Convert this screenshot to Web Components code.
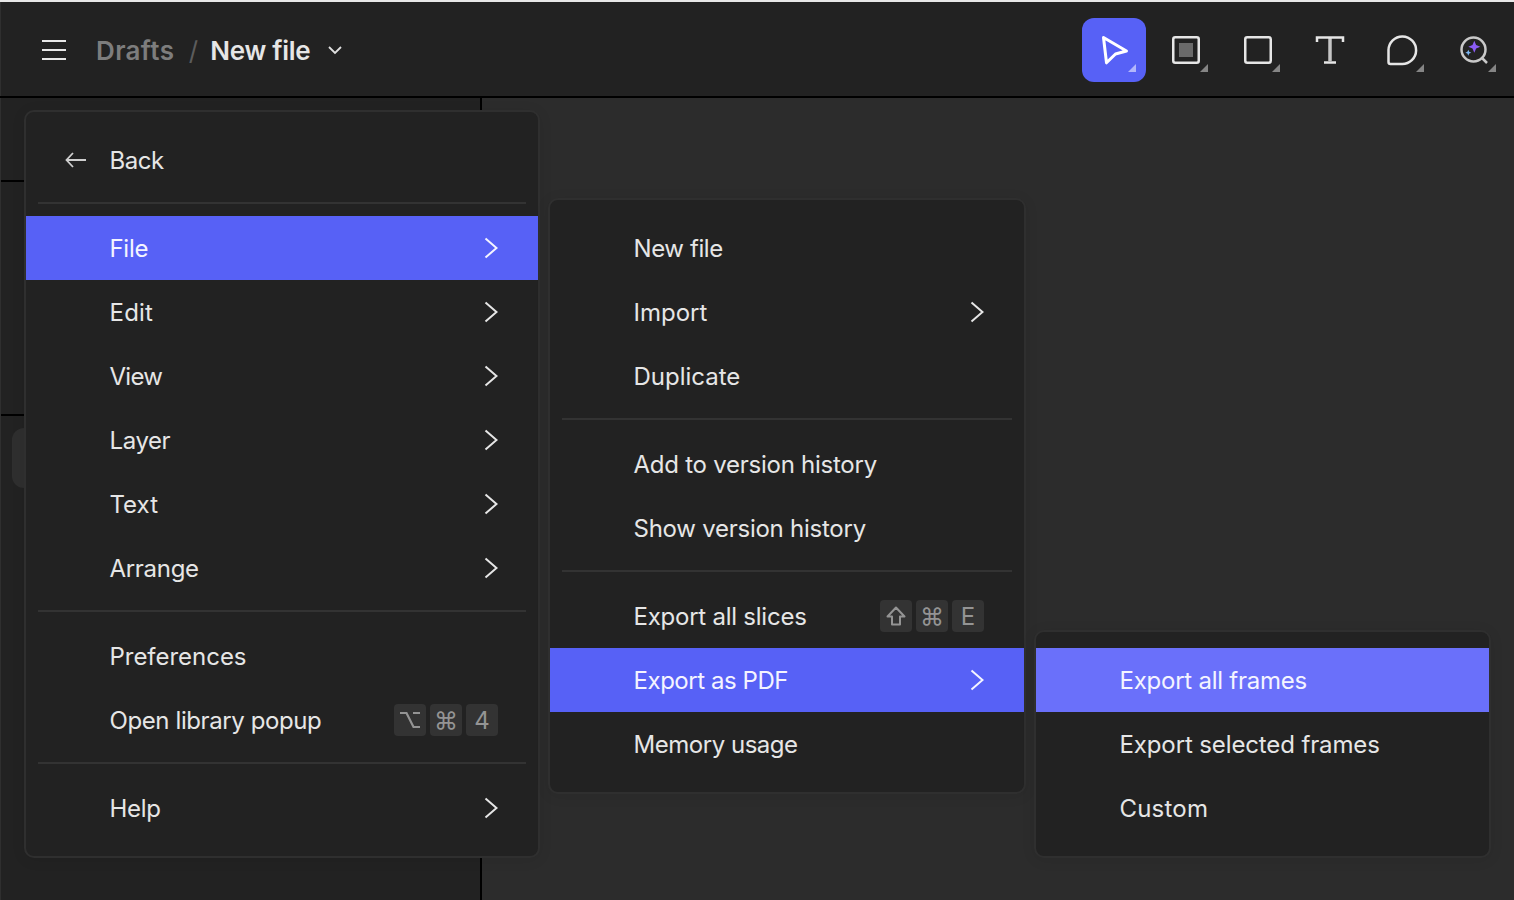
<!DOCTYPE html>
<html lang="en">
<head>
<meta charset="utf-8">
<title>New file</title>
<style>
  html, body { margin: 0; height: 100%; overflow: hidden; background: #2c2c2c; }
  body { font-family: Inter, "Liberation Sans", sans-serif; color: #e6e6e6; }
  app-shell { height: 900px; }
</style>
</head>
<body>

<template id="tool-button-tpl">
  <style>
    :host {
      display: flex;
      position: relative;
      width: 64px;
      height: 64px;
      align-items: center;
      justify-content: center;
      border-radius: 12px;
    }
    :host([active]) { background: #5761f6; }
    .corner {
      position: absolute;
      right: 10px;
      bottom: 10px;
      width: 8px;
      height: 8px;
      background: #858585;
      clip-path: polygon(100% 0, 100% 100%, 0 100%);
    }
    :host([active]) .corner { background: #b3b7fb; }
    :host([plain]) .corner { display: none; }
  </style>
  <slot></slot>
  <span class="corner"></span>
</template>

<template id="menu-item-tpl">
  <style>
    :host {
      display: flex;
      align-items: center;
      height: 64px;
      padding: 0 40px 0 84px;
      font-size: 24px;
      letter-spacing: -0.3px;
      color: #e6e6e6;
      box-sizing: border-box;
    }
    :host([active]) { background: var(--active-bg, #5761f6); color: #f4f4ff; }
    .label { flex: 1; white-space: nowrap; margin-left: -0.5px; }
    .lead { display: flex; width: 84px; margin-left: -84px; justify-content: center; padding-left: 16px; box-sizing: border-box; }
  </style>
  <span class="lead"><slot name="lead"></slot></span>
  <span class="label"><slot></slot></span>
  <slot name="end"></slot>
</template>

<template id="key-caps-tpl">
  <style>
    :host { display: flex; gap: 4px; letter-spacing: 0; }
    ::slotted(span) {
      display: flex;
      width: 32px;
      height: 32px;
      align-items: center;
      justify-content: center;
      border-radius: 4px;
      background: #333333;
      color: #949494;
      font-size: 24px;
      font-family: Inter, "DejaVu Sans", sans-serif;
    }
  </style>
  <slot></slot>
</template>

<template id="menu-panel-tpl">
  <style>
    :host {
      display: block;
      position: absolute;
      box-sizing: border-box;
      border: 2px solid #2f2f2f;
      border-radius: 10px;
      background: #222222;
      padding: 16px 0;
      box-shadow: 0 2px 14px rgba(0, 0, 0, 0.08);
    }
  </style>
  <slot></slot>
</template>

<template id="menu-sep-tpl">
  <style>
    :host { display: block; height: 2px; margin: 10px 12px 12px; background: #333333; }
  </style>
</template>

<template id="app-header-tpl">
  <style>
    :host {
      display: flex;
      align-items: center;
      height: 96px;
      flex: none;
      box-sizing: border-box;
      padding: 4px 8px 0 42px;
      background: #222222;
      border-left: 1px solid #2f2f2f;
    }
    .burger { display: block; margin-left: -1px; }
    .crumbs {
      display: flex;
      align-items: center;
      margin-left: 30px;
      font-size: 26px;
      font-weight: 600;
      letter-spacing: -0.3px;
      color: #e6e6e6;
    }
    .muted { color: #7d7d7d; letter-spacing: 0.35px; }
    .slash { color: #5c5c5c; font-weight: 400; margin: 0 12.5px 0 14.5px; }
    .caret { display: block; margin-left: 18px; }
    .tools { display: flex; gap: 8px; margin-left: auto; }
  </style>
  <svg class="burger" width="24" height="20" viewBox="0 0 24 20" fill="none" stroke="#e8e8e8" stroke-width="2">
    <path d="M0 1h24M0 10h24M0 19h24"/>
  </svg>
  <div class="crumbs">
    <span class="muted">Drafts</span>
    <span class="slash">/</span>
    <span>New file</span>
    <svg class="caret" width="14" height="9" viewBox="0 0 14 9" fill="none" stroke="#e0e0e0" stroke-width="1.8">
      <path d="M1 1l6 6 6-6"/>
    </svg>
  </div>
  <div class="tools"><slot></slot></div>
</template>

<template id="app-shell-tpl">
  <style>
    :host { display: flex; flex-direction: column; position: relative; background: #2c2c2c; }
    .topline { height: 2px; background: #e8e8e8; position: absolute; inset: 0 0 auto 0; }
    .rule { height: 2px; background: #000; flex: none; }
    .work { display: flex; flex: 1; min-height: 0; }
    .side {
      width: 482px;
      flex: none;
      display: flex;
      flex-direction: column;
      box-sizing: border-box;
      position: relative;
      background: #222222;
      border-left: 1px solid #2f2f2f;
      border-right: 2px solid #000;
    }
    .pane { height: 82px; border-bottom: 2px solid #000; }
    .pane.tall { height: 232px; }
    .pill {
      position: absolute;
      left: 11px;
      top: 330px;
      width: 30px;
      height: 60px;
      border-radius: 12px;
      background: #2f2f2f;
    }
    .canvas { flex: 1; background: #2c2c2c; }
  </style>
  <div class="topline"></div>
  <slot name="header"></slot>
  <div class="rule"></div>
  <div class="work">
    <div class="side">
      <div class="pane"></div>
      <div class="pane tall"></div>
      <div class="pill"></div>
    </div>
    <div class="canvas"></div>
  </div>
  <slot></slot>
</template>

<script>
  class TplElement extends HTMLElement {
    constructor() {
      super();
      const tpl = document.getElementById(this.constructor.tpl);
      this.attachShadow({ mode: "open" }).appendChild(tpl.content.cloneNode(true));
    }
  }
  class AppShell extends TplElement { static tpl = "app-shell-tpl"; }
  class AppHeader extends TplElement { static tpl = "app-header-tpl"; }
  class ToolButton extends TplElement { static tpl = "tool-button-tpl"; }
  class MenuPanel extends TplElement { static tpl = "menu-panel-tpl"; }
  class MenuItem extends TplElement { static tpl = "menu-item-tpl"; }
  class MenuSep extends TplElement { static tpl = "menu-sep-tpl"; }
  class KeyCaps extends TplElement { static tpl = "key-caps-tpl"; }

  customElements.define("app-shell", AppShell);
  customElements.define("app-header", AppHeader);
  customElements.define("tool-button", ToolButton);
  customElements.define("menu-panel", MenuPanel);
  customElements.define("menu-item", MenuItem);
  customElements.define("menu-sep", MenuSep);
  customElements.define("key-caps", KeyCaps);
</script>

<svg width="0" height="0" style="position:absolute">
  <defs>
    <symbol id="chev" viewBox="0 0 14 22">
      <path d="M1.500 1.500L12.500 11 1.500 20.500" fill="none" stroke="currentColor" stroke-width="2"/>
    </symbol>
  </defs>
</svg>

<app-shell>
  <app-header slot="header">
    <tool-button active>
      <svg width="32" height="32" viewBox="0 0 32 32" fill="none" stroke="#fff" stroke-width="3" stroke-linejoin="round">
        <path d="M5.500 3.500L28.500 17 17.500 20 8.500 28.800Z"/>
      </svg>
    </tool-button>
    <tool-button>
      <svg width="32" height="32" viewBox="0 0 32 32" fill="none">
        <rect x="3.250" y="3.250" width="25.500" height="25.500" rx="2" stroke="#e6e6e6" stroke-width="2.500"/>
        <rect x="9" y="9" width="14" height="14" fill="#6a6a6a"/>
      </svg>
    </tool-button>
    <tool-button>
      <svg width="32" height="32" viewBox="0 0 32 32" fill="none">
        <rect x="3.250" y="3.250" width="25.500" height="25.500" rx="2" stroke="#e6e6e6" stroke-width="2.500"/>
      </svg>
    </tool-button>
    <tool-button plain>
      <svg width="32" height="32" viewBox="0 0 32 32" fill="none" stroke="#e6e6e6" stroke-width="2.500">
        <path d="M16 4V27" stroke="#c4c4c4" stroke-width="3.500"/>
        <path d="M3 8V3.500H29V8M10 28.500H22"/>
      </svg>
    </tool-button>
    <tool-button>
      <svg width="32" height="32" viewBox="0 0 32 32" fill="none" stroke="#e6e6e6" stroke-width="2.500" stroke-linejoin="round">
        <path d="M2.500 16A13.800 13.800 0 1 1 16 30H4.500A2 2 0 0 1 2.500 28Z"/>
      </svg>
    </tool-button>
    <tool-button>
      <svg width="32" height="32" viewBox="0 0 32 32" fill="none">
        <circle cx="15.500" cy="15.500" r="12" stroke="#c9c9c9" stroke-width="2.500"/>
        <path d="M24.500 24.500l4.500 4.500" stroke="#c9c9c9" stroke-width="2.500"/>
        <path d="M16.300 6.700l1.800 4.200 4.200 1.800-4.200 1.800-1.800 4.200-1.800-4.200-4.200-1.800 4.200-1.800Z" fill="#8b5cf5"/>
        <path d="M10.300 15.700l.9 2.100 2.100.9-2.100.9-.9 2.100-.9-2.100-2.100-.9 2.100-.9Z" fill="#7db8f5"/>
      </svg>
    </tool-button>
  </app-header>

  <menu-panel style="left:24px;top:110px;width:516px">
    <menu-item style="letter-spacing:-0.5px">
      <svg slot="lead" width="22" height="16" viewBox="0 0 22 16" fill="none" stroke="#cfcfcf" stroke-width="1.800">
        <path d="M8 1L1.500 8 8 15M1.500 8H21"/>
      </svg>
      Back
    </menu-item>
    <menu-sep></menu-sep>
    <menu-item active>File<svg slot="end" width="14" height="22"><use href="#chev"/></svg></menu-item>
    <menu-item style="letter-spacing:0.2px">Edit<svg slot="end" width="14" height="22"><use href="#chev"/></svg></menu-item>
    <menu-item style="letter-spacing:-0.7px">View<svg slot="end" width="14" height="22"><use href="#chev"/></svg></menu-item>
    <menu-item style="letter-spacing:-0.4px">Layer<svg slot="end" width="14" height="22"><use href="#chev"/></svg></menu-item>
    <menu-item style="letter-spacing:0">Text<svg slot="end" width="14" height="22"><use href="#chev"/></svg></menu-item>
    <menu-item>Arrange<svg slot="end" width="14" height="22"><use href="#chev"/></svg></menu-item>
    <menu-sep></menu-sep>
    <menu-item style="letter-spacing:-0.03px">Preferences</menu-item>
    <menu-item style="letter-spacing:-0.4px">Open library popup
      <key-caps slot="end">
        <span>
          <svg width="22" height="18" viewBox="0 0 22 18" fill="none" stroke="#949494" stroke-width="2.200"><path d="M1 2H7.500L14.500 16H21M14 2H21"/></svg>
        </span>
        <span>⌘</span><span>4</span>
      </key-caps>
    </menu-item>
    <menu-sep></menu-sep>
    <menu-item>Help<svg slot="end" width="14" height="22"><use href="#chev"/></svg></menu-item>
  </menu-panel>

  <menu-panel style="left:548px;top:198px;width:478px">
    <menu-item style="letter-spacing:-0.4px">New file</menu-item>
    <menu-item style="letter-spacing:0">Import<svg slot="end" width="14" height="22"><use href="#chev"/></svg></menu-item>
    <menu-item style="letter-spacing:0">Duplicate</menu-item>
    <menu-sep></menu-sep>
    <menu-item style="letter-spacing:-0.25px">Add to version history</menu-item>
    <menu-item style="letter-spacing:-0.25px">Show version history</menu-item>
    <menu-sep></menu-sep>
    <menu-item style="letter-spacing:-0.24px">Export all slices
      <key-caps slot="end">
        <span>
          <svg width="20" height="20" viewBox="0 0 20 20" fill="none" stroke="#949494" stroke-width="2" stroke-linejoin="round"><path d="M10 1.500L18.500 10.500H14V18.500H6V10.500H1.500Z"/></svg>
        </span>
        <span>⌘</span><span>E</span>
      </key-caps>
    </menu-item>
    <menu-item active style="letter-spacing:-0.45px">Export as PDF<svg slot="end" width="14" height="22"><use href="#chev"/></svg></menu-item>
    <menu-item style="letter-spacing:-0.47px">Memory usage</menu-item>
  </menu-panel>

  <menu-panel style="left:1034px;top:630px;width:457px;--active-bg:#6a70fa">
    <menu-item active style="letter-spacing:-0.24px">Export all frames</menu-item>
    <menu-item style="letter-spacing:-0.12px">Export selected frames</menu-item>
    <menu-item style="letter-spacing:0.2px">Custom</menu-item>
  </menu-panel>
</app-shell>

</body>
</html>
